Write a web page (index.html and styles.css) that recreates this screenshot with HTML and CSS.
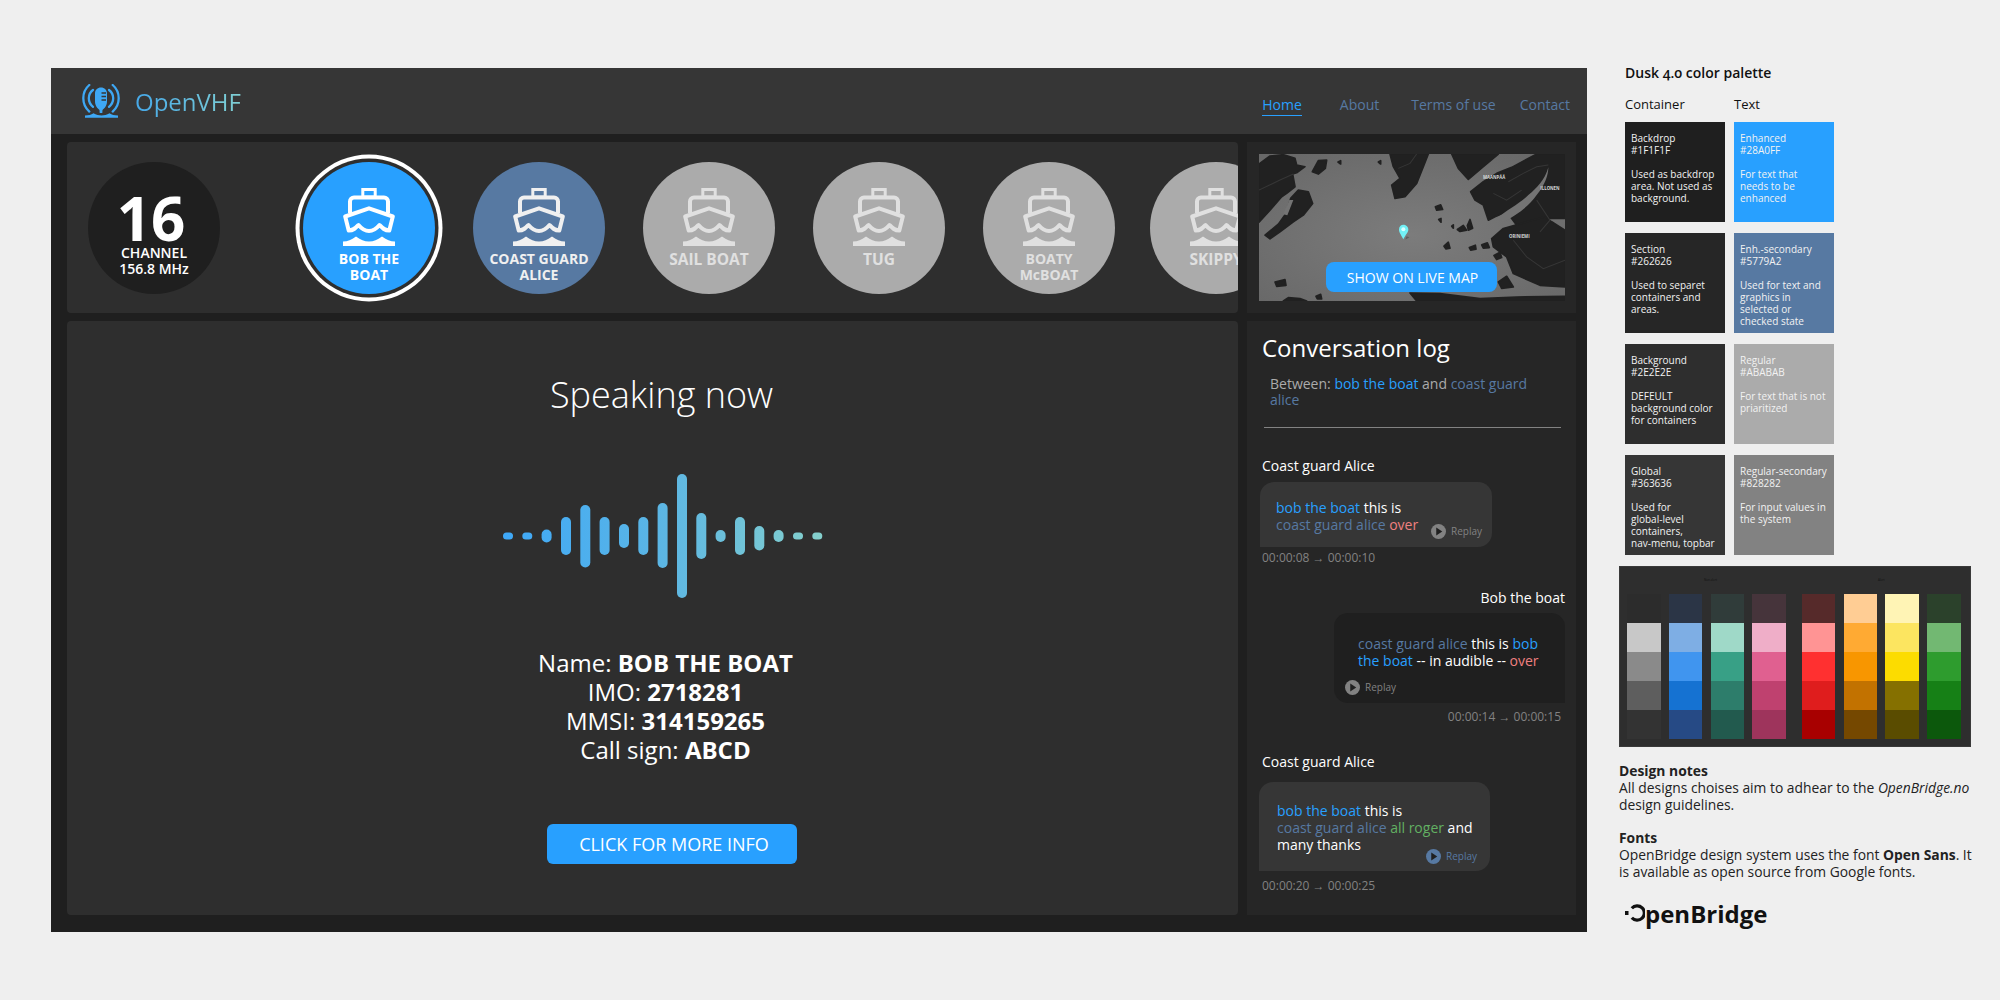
FILE: index.html
```html
<!DOCTYPE html>
<html lang="en">
<head>
<meta charset="utf-8">
<title>OpenVHF</title>
<link rel="stylesheet" href="styles.css">
</head>
<body>
<svg class="defs" width="0" height="0" aria-hidden="true">
  <defs>
    <symbol id="boat" viewBox="0 0 52 58">
      <rect x="19.8" y="1.5" width="12.4" height="7.5" fill="none" stroke="currentColor" stroke-width="3"/>
      <path d="M7 25V13.5a4 4 0 0 1 4-4H41a4 4 0 0 1 4 4V25" fill="none" stroke="currentColor" stroke-width="4"/>
      <path d="M2.2 28.5L26 20.3L49.8 28.5L46.3 42.5c-4.800 0-7-2.500-9.800-5.500c-2.500 3-5.500 6-10.500 6s-8-3-10.500-6c-2.800 3-5 5.500-9.800 5.500Z" fill="none" stroke="currentColor" stroke-width="4" stroke-linejoin="round"/>
      <path d="M0 58H52V53.500C47 53.500 44 52 39 48.500C34 52 31 53.500 26 53.500S18 52 13 48.500C8 52 5 53.500 0 53.500Z" fill="currentColor"/>
    </symbol>
    <symbol id="play" viewBox="0 0 16 16">
      <circle cx="8" cy="8" r="8" fill="currentColor"/>
      <path d="M5.600 3.800L12 8L5.600 12.200Z" class="play-mark"/>
    </symbol>
    <linearGradient id="wavegrad" gradientUnits="userSpaceOnUse" x1="0" y1="0" x2="320" y2="0">
      <stop offset="0" stop-color="#3ea8f8"/>
      <stop offset="0.5" stop-color="#5cb6e4"/>
      <stop offset="1" stop-color="#85d0cc"/>
    </linearGradient>
    <radialGradient id="seagrad" cx="0.5" cy="0.55" r="0.7">
      <stop offset="0" stop-color="#7c7c7c"/>
      <stop offset="1" stop-color="#686868"/>
    </radialGradient>
  </defs>
</svg>

<div class="page">
  <main class="frame">
    <header class="topbar">
      <div class="brand">
        <svg class="brand-icon" viewBox="0 0 38 34" width="38" height="34">
          <g fill="none" stroke="#3ea8f5" stroke-width="2.300" stroke-linecap="round">
            <path d="M7.300 1C3.200 4.500 1.300 9 1.300 14.300S3.200 24 7.300 27.600"/>
            <path d="M30.700 1C34.800 4.500 36.700 9 36.700 14.300S34.800 24 30.700 27.600"/>
            <path d="M11 6C8.300 8 6.800 11 6.800 14.300S8.300 20.700 11 22.800"/>
            <path d="M27 6C29.700 8 31.200 11 31.200 14.300S29.700 20.700 27 22.800"/>
          </g>
          <path d="M19 3.500c3.500 0 6 2.500 6 6v8c0 4-2.500 7-4.500 8.500L20.300 29H17.700L17.500 26C15.500 24.500 13 21.500 13 17.500v-8c0-3.500 2.500-6 6-6Z" fill="#3ea8f5"/>
          <path d="M19.500 9H24M19.500 12.500H24M19.500 16H24" stroke="#363636" stroke-width="1.300"/>
          <path d="M3 33.800H36V31.500C32 31.500 30 30.800 27.500 29.300C25 30.800 22 31.500 19.500 31.500S14 30.800 11.500 29.300C9 30.800 7 31.500 3 31.500Z" fill="#3ea8f5"/>
        </svg>
        <span class="brand-name">OpenVHF</span>
      </div>
      <nav class="nav">
        <a class="nav-link nav-active">Home</a>
        <a class="nav-link nav-about">About</a>
        <a class="nav-link nav-terms">Terms of use</a>
        <a class="nav-link nav-contact">Contact</a>
      </nav>
    </header>

    <div class="content">
      <section class="panel boats">
        <div class="channel">
          <span class="channel-num">16</span>
          <span class="channel-line">CHANNEL</span>
          <span class="channel-line">156.8 MHz</span>
        </div>
        <div class="boat-list">
          <div class="boat boat-selected">
            <svg class="boat-icon"><use href="#boat"/></svg>
            <span class="boat-label">BOB THE<br>BOAT</span>
          </div>
          <div class="boat boat-secondary">
            <svg class="boat-icon"><use href="#boat"/></svg>
            <span class="boat-label">COAST GUARD<br>ALICE</span>
          </div>
          <div class="boat">
            <svg class="boat-icon"><use href="#boat"/></svg>
            <span class="boat-label boat-label-big">SAIL BOAT</span>
          </div>
          <div class="boat">
            <svg class="boat-icon"><use href="#boat"/></svg>
            <span class="boat-label boat-label-big">TUG</span>
          </div>
          <div class="boat">
            <svg class="boat-icon"><use href="#boat"/></svg>
            <span class="boat-label">BOATY<br>McBOAT</span>
          </div>
          <div class="boat boat-last">
            <svg class="boat-icon"><use href="#boat"/></svg>
            <span class="boat-label boat-label-big">SKIPPY</span>
          </div>
        </div>
      </section>

      <section class="panel-map">
        <div class="map">
          <svg class="map-art" viewBox="27 12 918 440" width="306" height="147" preserveAspectRatio="none">
            <rect x="27" y="12" width="918" height="440" fill="url(#seagrad)"/>
            <g fill="#212121" stroke="#212121" stroke-width="5" stroke-linejoin="round">
              <path d="M27 42L60 18L100 14L135 25L140 45L165 50L140 68L128 72L135 110L110 130L95 140L60 180L27 216Z"/>
              <path d="M45 255L85 222L108 190L122 145L145 120L175 125L188 160L160 195L130 215L90 245L60 266Z"/>
              <path d="M187 65L205 32L230 30L226 55L205 72Z"/>
              <path d="M420 12H535L520 50L500 100L465 140L435 145L425 105L450 85L430 50Z"/>
              <path d="M605 12H745L700 50L655 88L625 55Z"/>
              <path d="M662 125L700 95L740 70L785 52L860 12H945V205H885L800 225L770 185L735 200L715 210L700 165L675 150Z"/>
              <path d="M725 265L760 235L885 200L905 215L945 240V410L870 405L790 370L770 320L730 290Z"/>
              <path d="M75 395L105 388L108 405L80 408Z"/>
              <path d="M745 395L770 378L790 410L755 414Z"/>
              <path d="M480 428L570 430L690 445L800 440L945 438V452H500Z"/>
              <path d="M100 452L115 442L150 445L170 452Z"/>
              <path d="M556 170L572 164L578 178L560 180Z"/>
              <path d="M622 238L640 226L650 240L630 244Z"/>
              <path d="M652 226L660 208L668 234L655 240Z"/>
              <path d="M582 288L595 276L600 294L588 296Z"/>
              <path d="M658 292L676 285L678 297L662 300Z"/>
              <path d="M695 284L712 278L718 292L700 294Z"/>
              <path d="M732 316L750 306L755 322L740 328Z"/>
              <path d="M198 438L212 432L215 446L202 446Z"/>
              <path d="M264 36L272 32L272 42Z"/>
              <path d="M385 36L392 32L392 42Z"/>
              <path d="M605 228L610 224L610 234Z"/>
              <path d="M566 208L573 205L573 216Z"/>
            </g>
            <g fill="none" stroke="#363636" stroke-width="3">
              <path d="M775 95L820 70L860 50L895 45"/>
              <path d="M860 150L900 210L870 245"/>
              <path d="M790 270L830 320L880 355L945 330"/>
              <path d="M445 55L480 40L500 12"/>
              <path d="M730 130L770 150L815 120"/>
              <path d="M27 120L90 90L130 72"/>
            </g>
            <path d="M895 52C885 90 860 115 835 135C810 160 770 180 740 205L760 215C800 195 835 170 860 135C885 105 895 75 895 52Z" fill="#747474"/>
            <path d="M100 192L118 150L130 150L112 195Z" fill="#747474"/>
            <g class="map-labels">
              <text x="699" y="86">MAANPÄÄ</text>
              <text x="871" y="119">ILLONEN</text>
              <text x="777" y="263">ORINIEMI</text>
            </g>
            <path d="M478 262L466 268L470 258Z" fill="#5c5c5c"/>
            <path d="M460 267C452 252 447 246 447 238C447 230 453 224 460 224C467 224 475 230 475 238C475 246 468 252 460 267Z" fill="#72f0f5"/>
            <circle cx="460" cy="237" r="6" fill="#d9ffff"/>
          </svg>
          <a class="btn btn-map">SHOW ON LIVE MAP</a>
        </div>
      </section>

      <section class="panel speaking">
        <h1 class="speaking-title">Speaking now</h1>
        <svg class="wave" viewBox="0 0 320 124" width="320" height="124">
          <g fill="url(#wavegrad)">
            <rect x="0" y="58.500" width="10" height="7" rx="3.500"/>
            <rect x="19.300" y="58.500" width="10" height="7" rx="3.500"/>
            <rect x="38.600" y="55.500" width="10" height="13" rx="5"/>
            <rect x="58" y="43" width="10" height="38" rx="5"/>
            <rect x="77.300" y="31" width="10" height="62.500" rx="5"/>
            <rect x="96.600" y="43" width="10" height="38" rx="5"/>
            <rect x="116" y="50" width="10" height="24" rx="5"/>
            <rect x="135.300" y="43" width="10" height="38" rx="5"/>
            <rect x="154.600" y="29" width="10" height="65" rx="5"/>
            <rect x="174" y="0" width="10" height="124" rx="5"/>
            <rect x="193.300" y="39" width="10" height="46" rx="5"/>
            <rect x="212.600" y="56" width="10" height="12" rx="5"/>
            <rect x="232" y="43" width="10" height="38" rx="5"/>
            <rect x="251.300" y="52" width="10" height="24.500" rx="5"/>
            <rect x="270.600" y="56" width="10" height="12" rx="5"/>
            <rect x="290" y="58.500" width="10" height="7" rx="3.500"/>
            <rect x="309.300" y="58.500" width="10" height="7" rx="3.500"/>
          </g>
        </svg>
        <div class="info">
          <div>Name: <b>BOB THE BOAT</b></div>
          <div>IMO: <b>2718281</b></div>
          <div>MMSI: <b>314159265</b></div>
          <div>Call sign: <b>ABCD</b></div>
        </div>
        <a class="btn btn-info">CLICK FOR MORE INFO</a>
      </section>

      <section class="panel-log">
        <h2 class="log-title">Conversation log</h2>
        <p class="log-between">Between: <span class="t-enh">bob the boat</span> and <span class="t-sec">coast guard alice</span></p>
        <hr class="log-rule">

        <div class="msg msg-one">
          <div class="msg-name">Coast guard Alice</div>
          <div class="bubble bubble-one">
            <p class="bubble-text"><span class="t-enh">bob the boat</span> this is<br><span class="t-sec">coast guard alice</span> <span class="t-red">over</span></p>
            <div class="replay replay-one"><svg class="play"><use href="#play"/></svg><span>Replay</span></div>
          </div>
          <div class="msg-time">00:00:08 → 00:00:10</div>
        </div>

        <div class="msg msg-two">
          <div class="msg-name msg-right">Bob the boat</div>
          <div class="bubble bubble-two">
            <p class="bubble-text"><span class="t-sec">coast guard alice</span> this is <span class="t-enh">bob<br>the boat</span> -- in audible -- <span class="t-red">over</span></p>
            <div class="replay replay-two"><svg class="play"><use href="#play"/></svg><span>Replay</span></div>
          </div>
          <div class="msg-time msg-time-right">00:00:14 → 00:00:15</div>
        </div>

        <div class="msg msg-three">
          <div class="msg-name">Coast guard Alice</div>
          <div class="bubble bubble-three">
            <p class="bubble-text"><span class="t-enh">bob the boat</span> this is<br><span class="t-sec">coast guard alice</span> <span class="t-green">all roger</span> and<br>many thanks</p>
            <div class="replay replay-three"><svg class="play"><use href="#play"/></svg><span>Replay</span></div>
          </div>
          <div class="msg-time">00:00:20 → 00:00:25</div>
        </div>
      </section>
    </div>
  </main>

  <aside class="side">
    <div class="palette-head">
      <h3 class="side-title">Dusk 4.0 color palette</h3>
      <div class="swatch-heads"><span>Container</span><span>Text</span></div>
      <div class="swatches">
        <div class="swatch s-backdrop">Backdrop<br>#1F1F1F<br><br>Used as backdrop area. Not used as background.</div>
        <div class="swatch s-enh">Enhanced<br>#28A0FF<br><br>For text that<br>needs to be<br>enhanced</div>
        <div class="swatch s-section">Section<br>#262626<br><br>Used to separet containers and areas.</div>
        <div class="swatch s-enh2">Enh.-secondary<br>#5779A2<br><br>Used for text and graphics in<br>selected or<br>checked state</div>
        <div class="swatch s-background">Background<br>#2E2E2E<br><br>DEFEULT<br>background color for containers</div>
        <div class="swatch s-regular">Regular<br>#ABABAB<br><br>For text that is not priaritized</div>
        <div class="swatch s-global">Global<br>#363636<br><br>Used for<br>global-level containers,<br>nav-menu, topbar</div>
        <div class="swatch s-regular2">Regular-secondary<br>#828282<br><br>For input values in the system</div>
      </div>
    </div>

    <div class="palette-image">
      <div class="pal-group pal-nonalert">
        <div class="pal-label">Non alert</div>
        <div class="pal-cols"><i class="c1"></i><i class="c2"></i><i class="c3"></i><i class="c4"></i></div>
      </div>
      <div class="pal-group">
        <div class="pal-label">Alert</div>
        <div class="pal-cols"><i class="c5"></i><i class="c6"></i><i class="c7"></i><i class="c8"></i></div>
      </div>
    </div>

    <div class="notes">
      <p><b>Design notes</b><br>All designs choises aim to adhear to the <em>OpenBridge.no</em><br>design guidelines.</p>
      <p><b>Fonts</b><br>OpenBridge design system uses the font <b>Open Sans</b>. It<br>is available as open source from Google fonts.</p>
    </div>

    <div class="ob-logo">
      <svg class="ob-mark" viewBox="0 0 20 20" width="20" height="20">
        <rect x="0" y="7" width="3.500" height="4" fill="#111"/>
        <path d="M6.800 4.200A7.200 7.200 0 1 1 6.800 13.800" fill="none" stroke="#111" stroke-width="3.200"/>
      </svg>
      <span>penBridge</span>
    </div>
  </aside>
</div>
</body>
</html>
```

FILE: styles.css
```css
* { box-sizing: border-box; }

html, body { margin: 0; padding: 0; }

body {
  background: #efefef;
  font-family: "Open Sans", "Noto Sans", sans-serif;
  color: #fff;
  overflow: hidden;
}

.defs { position: absolute; }

.page {
  display: flex;
  align-items: flex-start;
  padding: 50px 0 0 51px;
  height: 1000px;
}

/* ---------- app frame ---------- */
.frame {
  width: 1536px;
  height: 864px;
  margin-top: 18px;
  background: #1f1f1f;
  flex: none;
}

.topbar {
  height: 66px;
  background: #363636;
  display: flex;
  justify-content: space-between;
  padding: 16px 17px 0 31px;
}

.brand { display: flex; align-items: flex-start; gap: 15px; }

.brand-name {
  font-size: 24px;
  line-height: 33px;
  margin-top: 1px;
  background: linear-gradient(90deg, #46a8e8, #80d0d4);
  -webkit-background-clip: text;
  background-clip: text;
  color: transparent;
}

.nav { display: flex; align-items: flex-start; padding-top: 11px; }

.nav-link {
  font-size: 14px;
  line-height: 19px;
  color: #5779a2;
  padding-bottom: 1px;
}

.nav-active { color: #28a0ff; border-bottom: 1px solid #28a0ff; }
.nav-about { margin-left: 38px; }
.nav-terms { margin-left: 32px; }
.nav-contact { margin-left: 24px; }

.content {
  display: grid;
  grid-template-columns: 1171px 329px;
  grid-template-rows: 171px 594px;
  gap: 8px 9px;
  padding: 8px 11px 17px 16px;
}

.panel { background: #2e2e2e; border-radius: 4px; }
.panel-map, .panel-log { background: #262626; }

/* ---------- boats ---------- */
.boats {
  display: flex;
  align-items: center;
  padding-left: 21px;
  overflow: hidden;
}

.channel {
  width: 132px;
  height: 132px;
  flex: none;
  border-radius: 50%;
  background: #1f1f1f;
  display: flex;
  flex-direction: column;
  align-items: center;
  padding-top: 30px;
}

.channel-num {
  font-size: 60px;
  font-weight: 700;
  line-height: 52px;
  margin: 0 0 1px -6px;
}

.channel-line {
  font-size: 14px;
  font-weight: 600;
  line-height: 16px;
}

.boat-list {
  display: flex;
  gap: 38px;
  margin-left: 83px;
}

.boat {
  width: 132px;
  height: 132px;
  flex: none;
  border-radius: 50%;
  background: #ababab;
  color: #e0e0e0;
  display: flex;
  flex-direction: column;
  align-items: center;
  padding-top: 26px;
}

.boat-selected {
  background: #28a0ff;
  color: #fff;
  box-shadow: 0 0 0 3.500px #2e2e2e, 0 0 0 7.500px #fff;
}

.boat-secondary { background: #5779a2; color: #f0f0f0; }
.boat-last { margin-left: -3px; }

.boat-icon { width: 52px; height: 58px; flex: none; }

.boat-label {
  margin-top: 5px;
  font-size: 14px;
  font-weight: 700;
  line-height: 16px;
  text-align: center;
  white-space: nowrap;
}

.boat-label-big { font-size: 15.500px; font-weight: 700; }

/* ---------- map ---------- */
.panel-map { padding: 12px 11px 12px 12px; }

.map {
  position: relative;
  width: 306px;
  height: 147px;
}

.map-art { display: block; }

.map-labels text {
  font-family: "Open Sans", sans-serif;
  font-size: 13px;
  font-weight: 700;
  fill: #d8d8d8;
}

.btn {
  display: flex;
  align-items: center;
  justify-content: center;
  background: #28a0ff;
  color: #fff;
}

.btn-map {
  position: absolute;
  left: 67px;
  top: 108px;
  width: 171px;
  height: 30px;
  padding-left: 2px;
  border-radius: 8px;
  font-size: 14px;
}

/* ---------- speaking ---------- */
.speaking {
  display: flex;
  flex-direction: column;
  align-items: center;
  padding: 49px 0 0 18px;
}

.speaking-title {
  margin: 0;
  font-size: 36px;
  font-weight: 300;
  line-height: 49px;
}

.wave { display: block; margin: 55px 0 0 2px; flex: none; }

.info {
  margin: 50px 0 0 8px;
  font-size: 24px;
  line-height: 29px;
  text-align: center;
}

.info b { font-weight: 700; }

.btn-info {
  margin: 60px 0 0 20px;
  width: 250px;
  height: 40px;
  padding-left: 5px;
  border-radius: 6px;
  font-size: 18px;
}

/* ---------- log ---------- */
.panel-log {
  padding: 11px 11px 0 15px;
  overflow: hidden;
}

.log-title {
  margin: 0;
  font-size: 24px;
  font-weight: 400;
  line-height: 32px;
}

.log-between {
  margin: 12px 0 0;
  padding-left: 8px;
  font-size: 14px;
  line-height: 16px;
  color: #ababab;
  width: 290px;
}

.log-rule {
  margin: 19px 4px 0 2px;
  border: 0;
  height: 1px;
  background: #828282;
}

.t-enh { color: #28a0ff; }
.t-sec { color: #5779a2; }
.t-red { color: #f08080; }
.t-green { color: #62b062; }

.msg-name { font-size: 14px; line-height: 18px; }
.msg-right { text-align: right; }

.msg-one { margin-top: 29px; }
.msg-two { margin-top: 23px; }
.msg-three { margin-top: 28px; }

.bubble { width: 232px; border-radius: 14px; }

.bubble-text { margin: 0; font-size: 14px; line-height: 17px; white-space: nowrap; }

.bubble-one {
  margin: 7px 0 0 -2px;
  padding: 17px 10px 8px 16px;
  background: #363636;
  border-bottom-left-radius: 0;
}

.bubble-two {
  margin: 6px 0 0 auto;
  width: 231px;
  padding: 22px 11px 8px 24px;
  background: #1f1f1f;
  border-bottom-right-radius: 0;
}

.bubble-three {
  margin: 11px 0 0 -3px;
  width: 231px;
  padding: 20px 13px 7px 18px;
  background: #363636;
  border-bottom-left-radius: 0;
}

.replay {
  display: flex;
  align-items: center;
  gap: 5px;
  font-size: 10px;
  line-height: 15px;
  color: #828282;
}

.play { width: 15px; height: 15px; flex: none; }
.play-mark { fill: #1f1f1f; }

.replay-one { justify-content: flex-end; margin-top: -9px; }
.replay-two { margin: 11px 0 0 -13px; }
.replay-three { justify-content: flex-end; margin-top: -4px; color: #5779a2; }

.msg-time {
  margin-top: 3px;
  font-size: 12px;
  line-height: 16px;
  color: #828282;
}

.msg-two .msg-time { margin-top: 6px; }
.msg-three .msg-time { margin-top: 7px; }
.msg-time-right { text-align: right; padding-right: 4px; }

/* ---------- side column ---------- */
.side {
  width: 352px;
  margin-left: 32px;
  padding-top: 14px;
  flex: none;
  color: #111;
}

.palette-head { padding-left: 6px; }

.side-title {
  margin: 0;
  font-size: 14px;
  font-weight: 600;
  line-height: 18px;
  font-variant-numeric: oldstyle-nums;
}

.swatch-heads {
  display: flex;
  margin-top: 14px;
  font-size: 13px;
  font-weight: 500;
  line-height: 16px;
}

.swatch-heads span { width: 109px; }

.swatches {
  display: grid;
  grid-template-columns: 100px 100px;
  grid-auto-rows: 100px;
  gap: 11px 9px;
  margin-top: 10px;
}

.swatch {
  padding: 10px 0 0 6px;
  font-size: 10px;
  line-height: 12px;
  color: #f2f2f2;
}

.s-backdrop { background: #1f1f1f; }
.s-section { background: #262626; }
.s-background { background: #2e2e2e; }
.s-global { background: #363636; }
.s-enh { background: #28a0ff; }
.s-enh2 { background: #5779a2; }
.s-regular { background: #ababab; }
.s-regular2 { background: #828282; }

.palette-image {
  display: flex;
  gap: 16px;
  width: 352px;
  height: 181px;
  margin-top: 11px;
  padding: 10px 0 0 7px;
  background: #2e2e2e;
  border: 1px solid #3a3a3a;
}

.pal-label {
  height: 7px;
  margin-bottom: 10px;
  font-size: 3px;
  line-height: 7px;
  text-align: center;
  color: #111;
}

.pal-nonalert .pal-label { padding-left: 8px; }

.pal-cols { display: flex; gap: 8.300px; }

.pal-cols i { display: block; width: 33.500px; height: 145px; }

.c1 { background: linear-gradient(#2c2c2c 20%, #c8c8c8 20% 40%, #8a8a8a 40% 60%, #5e5e5e 60% 80%, #333333 80%); }
.c2 { background: linear-gradient(#2b3546 20%, #7eaee4 20% 40%, #4095ef 40% 60%, #1572d2 60% 80%, #264a85 80%); }
.c3 { background: linear-gradient(#303c3a 20%, #9fd9c8 20% 40%, #38a086 40% 60%, #2d7d6b 60% 80%, #225a4e 80%); }
.c4 { background: linear-gradient(#46343b 20%, #efaec8 20% 40%, #e06090 40% 60%, #bf416f 60% 80%, #9e345c 80%); }
.c5 { background: linear-gradient(#562a2a 20%, #ff9494 20% 40%, #ff3030 40% 60%, #df1d1d 60% 80%, #a80000 80%); }
.c6 { background: linear-gradient(#ffcd94 20%, #ffaa33 20% 40%, #f89600 40% 60%, #c27200 60% 80%, #754800 80%); }
.c7 { background: linear-gradient(#fff4b5 20%, #fce560 20% 40%, #fcdc00 40% 60%, #857000 60% 80%, #5a4c00 80%); }
.c8 { background: linear-gradient(#2b412b 20%, #72b872 20% 40%, #2e9c2e 40% 60%, #168016 60% 80%, #0c580c 80%); }

.notes {
  margin-top: 16px;
  font-size: 13.850px;
  line-height: 16.800px;
  color: #222;
  white-space: nowrap;
}

.notes p { margin: 0 0 16.800px; }

.ob-logo {
  display: flex;
  align-items: center;
  margin: 18px 0 0 6px;
  height: 30px;
  color: #111;
  font-size: 24px;
  font-weight: 700;
  line-height: 30px;
}

.ob-mark { flex: none; }
```
